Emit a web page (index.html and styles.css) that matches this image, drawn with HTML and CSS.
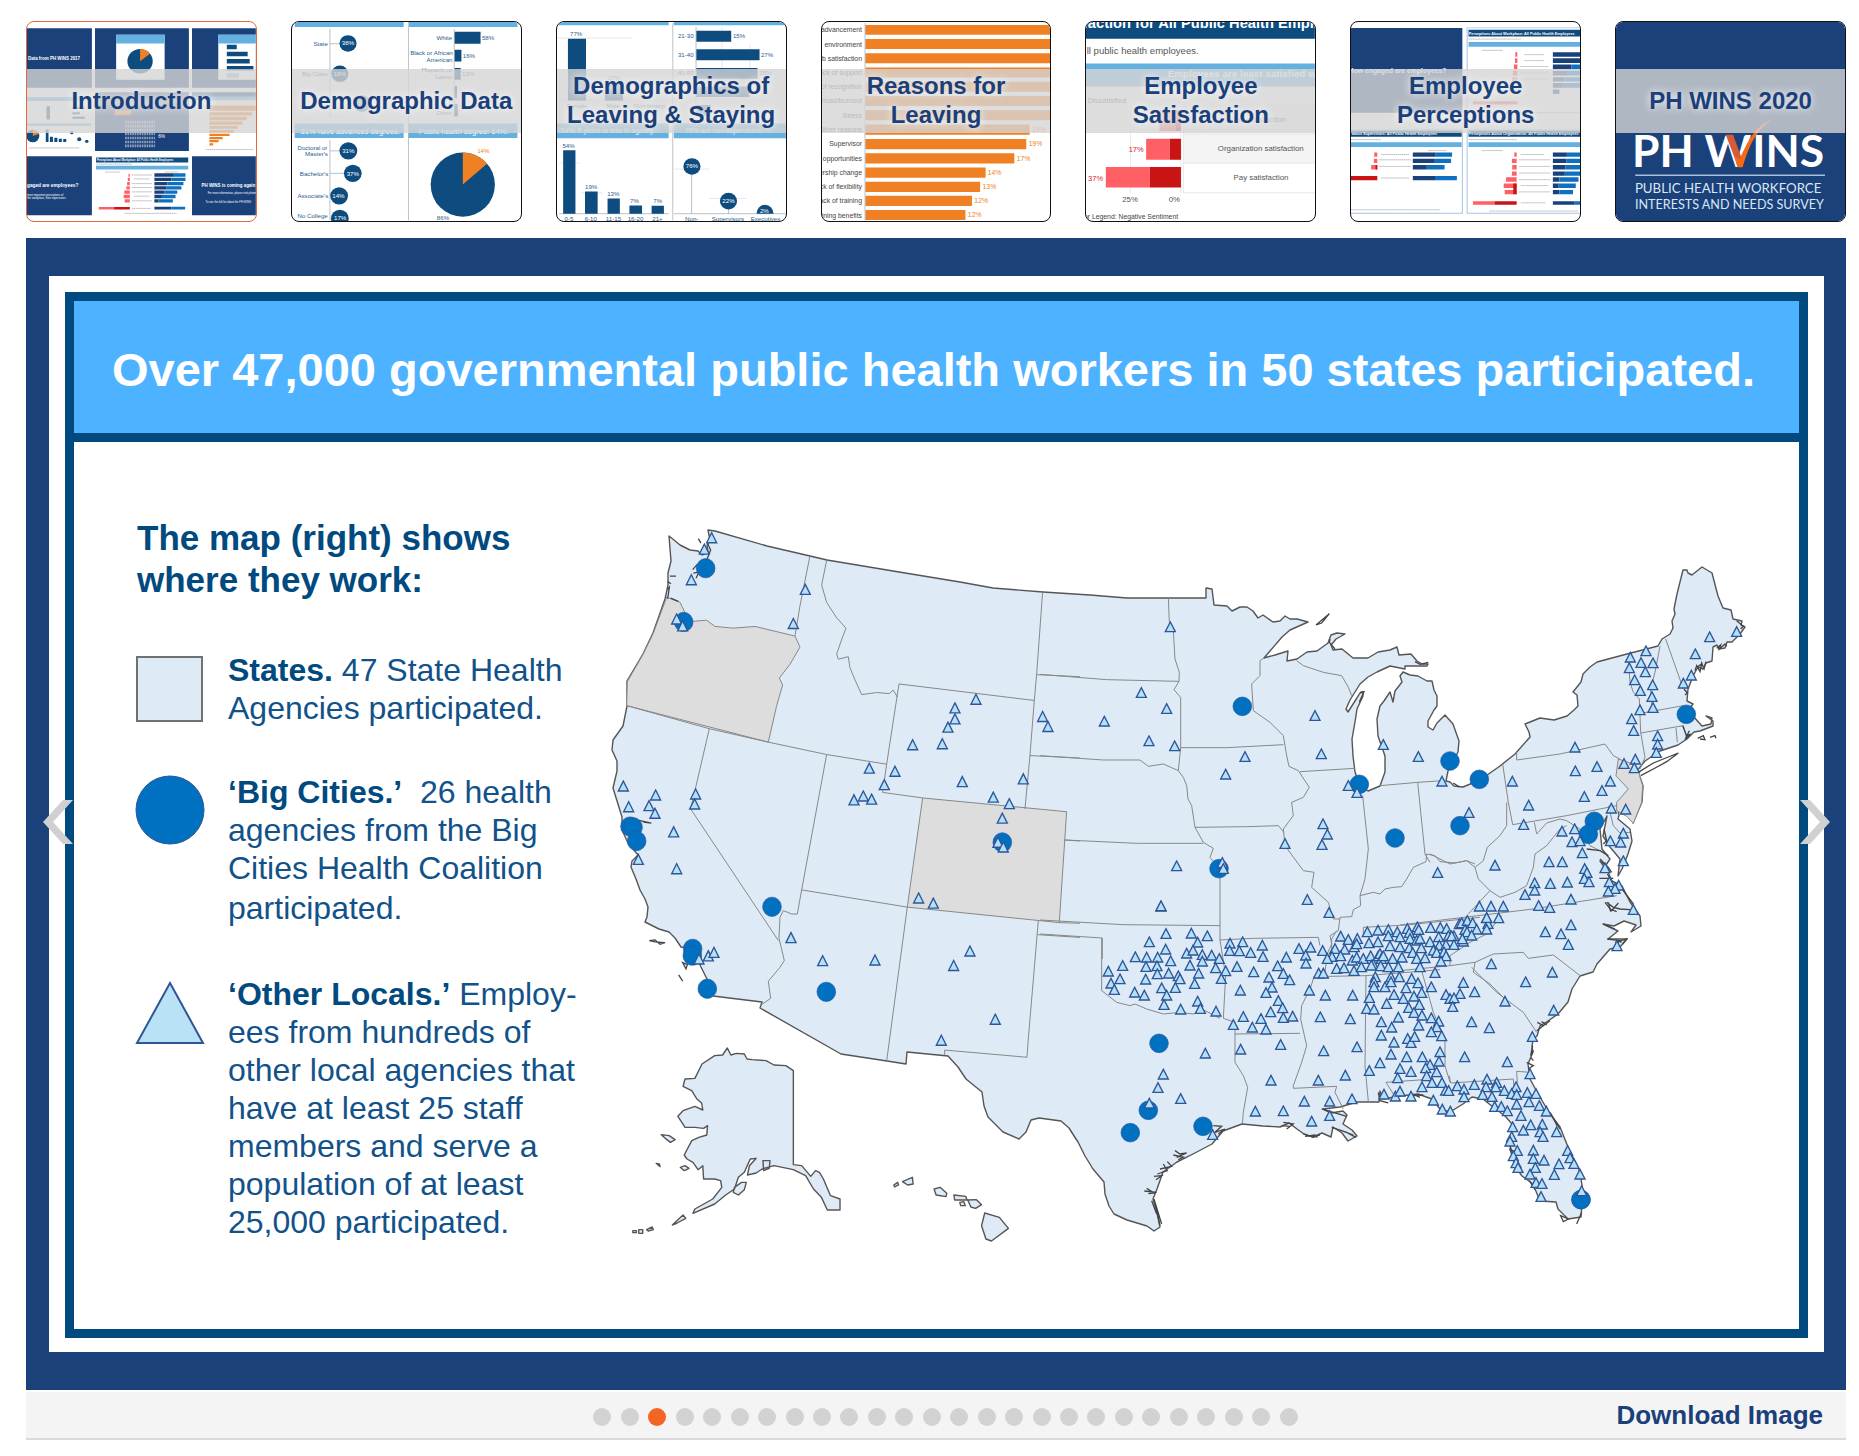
FILE: index.html
```html
<!DOCTYPE html>
<html lang="en">
<head>
<meta charset="utf-8">
<title>PH WINS Slides</title>
<link rel="stylesheet" href="styles.css">
</head>
<body>
<main class="page">
<nav class="thumbs" aria-label="Sections">
<a class="thumb thumb-active" href="#introduction">
<svg class="thumb-art" viewBox="77 61 670 583" preserveAspectRatio="xMidYMid slice" aria-hidden="true">
<g transform="scale(1 .968)">
<path class="navy" d="M77 82H267V262H77ZM276 82H551V262H276ZM560 82H747V262H560ZM276 276H551V453H276ZM77 469H267V648H77ZM560 469H747V648H560Z"/>
<path class="white" d="M338 102H480V238H338ZM637 102H747V238H637Z"/>
<path class="sky" d="M338 102H480V128H338ZM637 102H747V128H637ZM77 290H265V302H77ZM77 370H265V377H77ZM560 290H747V300H560ZM279 498H549V509H279Z"/>
<circle class="deep" cx="408" cy="182" r="37"/><path class="amber" d="M408 182V145A37 37 0 0 1 437 159Z"/>
<path class="deep" d="M662 132H691V146H662ZM662 153H723V167H662ZM662 175H729V189H662ZM662 196H740V210H662ZM132 388H140V426H132ZM144 410H153V426H144ZM157 413H166V426H157ZM170 416H179V426H170ZM183 417H192V426H183ZM134 318H144V358H134ZM210 320H246V326H210ZM210 336H232V342H210ZM210 350H246V356H210ZM279 473H549V488H279ZM560 276H747V289H560Z"/>
<path class="grey" d="M662 218H698V232H662Z"/>
<circle class="deep" cx="94" cy="408" r="19"/><path class="amber" d="M94 408V389A19 19 0 0 1 112 402Z"/>
<circle class="deep" cx="208" cy="398" r="5"/><circle class="deep" cx="230" cy="418" r="6"/><circle class="deep" cx="252" cy="424" r="5"/>
<path class="dots-light" d="M364 366H452M364 378H452M364 390H452M364 402H452M364 414H452M364 426H452M364 438H452"/>
<path class="amber" d="M334 330H382V345H334ZM611 316H747V332H611ZM611 336H736V346H611ZM611 350H720V360H611ZM611 364H708V374H611ZM611 378H694V386H611ZM611 390H682V398H611ZM611 401H670V408H611ZM611 411H650V418H611ZM611 420H638V427H611ZM611 430H622V437H611Z"/>
<path class="navy" d="M450 521H507V531H450ZM450 534H500V544H450ZM450 547H488V557H450ZM450 560H486V570H450ZM450 573H480V583H450ZM450 586H472V596H450ZM450 599H462V609H450ZM450 622H500V630H450Z"/>
<path class="blue" d="M507 521H541V531H507ZM500 534H541V544H500ZM488 547H535V557H488ZM486 560H529V570H486ZM480 573H517V583H480ZM472 586H512V596H472ZM462 599H504V609H462ZM500 622H540V630H500Z"/>
<path class="rose" d="M374 522H378V531H374ZM372 534H378V544H372ZM370 547H378V557H370ZM368 560H378V570H368ZM362 573H378V583H362ZM360 586H378V596H360ZM363 599H378V609H363ZM287 623H332V630H287Z"/>
<path class="red" d="M332 623H378V630H332Z"/>
<path class="faint" d="M384 526H443M390 538H436M384 552H443M384 564H443M384 577H443M390 590H436M384 604H443M306 517H350M480 517H520M363 642H515M82 444H230M600 449H740M384 627H440M280 493H384"/>
</g>
<text class="t-white t-b" x="80" y="171" font-size="13">Data from PH WINS 2017</text>
<text class="t-white t-b" x="77" y="544" font-size="14">gaged are employees?</text>
<text class="t-white t-b" x="588" y="544" font-size="13">PH WINS is coming again</text>
<text class="t-white t-b" x="281" y="468" font-size="8">Perceptions About Workplace: All Public Health Employees</text>
<text class="t-white" x="78" y="570" font-size="8">most important perceptions of</text>
<text class="t-white" x="78" y="579" font-size="8">the workplace, their supervisors</text>
<text class="t-white" x="606" y="564" font-size="8">For more information, please visit phwins</text>
<text class="t-white" x="600" y="590" font-size="8">To see the full list about the PH WINS</text>
<text class="t-white" x="461" y="402" font-size="14">6%</text>
</svg>
<span class="thumb-label">Introduction</span></a>
<a class="thumb" href="#demographic">
<svg class="thumb-art" viewBox="845 61 670 583" preserveAspectRatio="xMidYMid slice" aria-hidden="true">
<g transform="scale(1 .968)">
<path class="sky" d="M853 60H1172V78H853ZM1186 60H1505V78H1186ZM853 370H1172V414H853ZM1186 370H1505V414H1186Z"/>
<path class="axis" d="M956 84V350M956 420V663M1320 84V355M956 129H990M956 453H990M956 521H1000M1186 78V663"/>
<g class="deep"><circle cx="1009" cy="128" r="25"/><circle cx="985" cy="220" r="25"/><circle cx="1050" cy="310" r="25"/><circle cx="1010" cy="453" r="26"/><circle cx="1023" cy="521" r="26"/><circle cx="983" cy="589" r="26"/><circle cx="985" cy="657" r="26"/><path d="M1321 93H1397V129H1321ZM1321 147H1341V183H1321ZM1321 202H1339V238H1321ZM1321 257H1328V293H1321ZM1321 311H1330V348H1321Z"/></g>
<ellipse class="deep" cx="1345" cy="555" rx="94" ry="97"/><path class="amber" d="M1345 555V458A94 97 0 0 1 1416 492Z"/>
</g>
<g class="t-deep" font-size="18"><text x="908" y="131">State</text><text x="874" y="220">Big Cities</text><text x="861" y="435">Doctoral or</text><text x="883" y="455">Master's</text><text x="868" y="511">Bachelor's</text><text x="861" y="577">Associate's</text><text x="861" y="634">No College</text><text x="1268" y="114">White</text><text x="1191" y="157">Black or African</text><text x="1239" y="177">American</text><text x="1224" y="208">Hispanic or</text><text x="1265" y="228">Latino</text><text x="1268" y="334">Other</text><text x="1401" y="114">58%</text><text x="1345" y="167">16%</text><text x="1343" y="220">13%</text><text x="1269" y="641">86%</text></g>
<g class="t-white" font-size="18"><text x="991" y="130">38%</text><text x="967" y="219">18%</text><text x="992" y="445">31%</text><text x="1005" y="511">37%</text><text x="963" y="577">14%</text><text x="968" y="642">17%</text></g>
<g class="t-white" font-size="22"><text x="870" y="388">31% have advanced degrees.</text><text x="1216" y="388">Public health degree: 14%.</text></g>
<text class="t-amber" x="1387" y="445" font-size="18">14%</text>
</svg>
<span class="thumb-label">Demographic Data</span></a>
<a class="thumb" href="#leaving-staying">
<svg class="thumb-art" viewBox="45 61 670 583" preserveAspectRatio="xMidYMid slice" aria-hidden="true">
<g transform="scale(1 .968)">
<path class="sky" d="M45 60H372V73H45ZM387 60H715V73H387ZM45 370H372V415H45ZM387 370H715V415H387Z"/>
<path class="axis" d="M50 643H372M387 643H715M452 78V350M439 500V643M547 605V643M384 66V663"/>
<path class="grid" d="M45 112H265M45 301H372M50 490H110M115 580H180M385 508H490M490 597H600M610 130V350M528 80V350"/>
<path class="deep" d="M77 114H130V301H77ZM185 250H238V301H185ZM453 90H555V123H453ZM453 146H638V179H453ZM453 202H632V235H453ZM453 258H608V290H453ZM453 314H495V347H453ZM63 451H99V643H63ZM127 576H164V643H127ZM193 597H229V643H193ZM257 618H294V643H257ZM322 619H358V643H322Z"/>
<g class="deep"><circle cx="440" cy="500" r="25"/><circle cx="547" cy="605" r="25"/><path d="M629 643A25 27 0 0 1 679 643Z"/></g>
</g>
<g class="t-deep" font-size="18"><text x="83" y="103">77%</text><text x="194" y="231">22%</text><text x="61" y="430">54%</text><text x="127" y="551">19%</text><text x="192" y="571">13%</text><text x="259" y="590">7%</text><text x="327" y="591">7%</text><text x="399" y="109">21-30</text><text x="399" y="163">31-40</text><text x="399" y="217">41-50</text><text x="560" y="109">15%</text><text x="642" y="163">27%</text><text x="638" y="217">26%</text><text x="74" y="313">Female</text><text x="190" y="313">Male</text><text x="270" y="313">Non-binary/</text><text x="67" y="645">0-5</text><text x="126" y="645">6-10</text><text x="188" y="645">11-15</text><text x="252" y="645">16-20</text><text x="324" y="645">21+</text><text x="420" y="645">Non-</text><text x="498" y="645">Supervisors</text><text x="612" y="645">Executives</text></g>
<g class="t-white" font-size="18"><text x="422" y="490">76%</text><text x="529" y="592">22%</text><text x="639" y="620">2%</text></g>
<g class="t-white" font-size="20"><text x="55" y="387">54%: 5 years or less in agency.</text><text x="420" y="387">76% are non-supervisors.</text></g>
</svg>
<span class="thumb-label">Demographics of Leaving &amp; Staying</span></a>
<a class="thumb" href="#reasons">
<svg class="thumb-art" viewBox="815 61 670 583" preserveAspectRatio="xMidYMid slice" aria-hidden="true">
<g transform="scale(1 .968)"><path class="amber" d="M942 72H1485V102H942ZM942 115H1485V145H942ZM942 158H1485V188H942ZM942 201H1485V231H942ZM942 244H1485V274H942ZM942 287H1485V317H942ZM942 330H1485V360H942ZM942 373H1423V404H942ZM942 417H1413V448H942ZM942 460H1378V491H942ZM942 503H1294V534H942ZM942 546H1278V577H942ZM942 589H1254V620H942ZM942 632H1235V662H942Z"/><path class="axis" d="M941 66V664"/></g>
<g class="t-dark" font-size="20" text-anchor="end"><text x="932" y="91">advancement</text><text x="932" y="133">environment</text><text x="932" y="174">Job satisfaction</text><text x="932" y="216">Lack of support</text><text x="932" y="257">Lack of recognition</text><text x="932" y="299">Overload/burnout</text><text x="932" y="341">Stress</text><text x="932" y="383">Other reasons</text><text x="932" y="425">Supervisor</text><text x="932" y="467">opportunities</text><text x="932" y="508">Leadership change</text><text x="932" y="550">Lack of flexibility</text><text x="932" y="592">Lack of training</text><text x="932" y="634">Retaining benefits</text></g>
<g class="t-amber" font-size="20"><text x="1430" y="383">19%</text><text x="1420" y="425">19%</text><text x="1385" y="467">17%</text><text x="1300" y="508">14%</text><text x="1285" y="550">13%</text><text x="1261" y="592">12%</text><text x="1242" y="633">12%</text></g>
</svg>
<span class="thumb-label">Reasons for Leaving</span></a>
<a class="thumb" href="#satisfaction">
<svg class="thumb-art" viewBox="73 61 670 583" preserveAspectRatio="xMidYMid slice" aria-hidden="true">
<g transform="scale(1 .968)"><path class="deep" d="M73 60H743V114H73Z"/><path class="sky" d="M73 189H743V258H73Z"/><path class="panel" d="M358 313H745V402H358Z"/><path class="panel" d="M358 404H745V490H358Z"/><path class="grid" d="M358 313V580H745M358 490H745M358 403H745M203 318V580M351 318V580"/>
<path class="rose" d="M288 330H335V393H288ZM249 416H318V480H249ZM131 502H260V564H131Z"/><path class="red" d="M335 330H351V393H335ZM318 416H351V480H318ZM260 502H351V564H260Z"/></g>
<text class="t-white t-b" x="64" y="78" font-size="43">faction for All Public Health Employees</text>
<text class="t-grey" x="75" y="155" font-size="28">ll public health employees.</text>
<text class="t-white t-b" x="312" y="223" font-size="29">Employees are least satisfied with</text>
<text class="t-grey" x="78" y="298" font-size="22">Dissatisfied</text>
<g class="t-grey" font-size="23"><text x="500" y="354">Job satisfaction</text><text x="459" y="440">Organization satisfaction</text><text x="505" y="524">Pay satisfaction</text><text x="179" y="589">25%</text><text x="315" y="589">0%</text></g><text class="t-dark" x="67" y="639" font-size="20">or Legend: Negative Sentiment</text>
<g class="t-red" font-size="22"><text x="198" y="442">17%</text><text x="79" y="526">37%</text></g>
</svg>
<span class="thumb-label">Employee Satisfaction</span></a>
<a class="thumb" href="#perceptions">
<svg class="thumb-art" viewBox="840 61 670 583" preserveAspectRatio="xMidYMid slice" aria-hidden="true">
<g transform="scale(1 .968)"><path class="navy" d="M840 81H1166V338H840Z"/><path class="card" d="M1180 81H1515V338H1180ZM830 390H1166V642H830ZM1180 390H1515V642H1180Z"/>
<path class="deep" d="M1184 87H1515V107H1184ZM840 392H1164V410H840ZM1184 392H1515V410H1184Z"/><path class="sky" d="M1184 124H1515V138H1184ZM840 427H1164V441H840ZM1184 427H1515V441H1184Z"/>
<path class="navy" d="M1431 155H1515V168H1431ZM1431 173H1515V187H1431ZM1431 192H1485V206H1431ZM1431 211H1475V225H1431ZM1431 230H1465V243H1431ZM1431 248H1460V262H1431ZM1431 267H1450V281H1431ZM1021 458H1088V471H1021ZM1021 477H1083V490H1021ZM1021 496H1062V509H1021ZM1021 529H1086V542H1021ZM1431 458H1472V471H1431ZM1431 477H1470V490H1431ZM1431 496H1468V509H1431ZM1431 515H1466V528H1431ZM1431 533H1450V546H1431ZM1431 552H1448V565H1431ZM1431 571H1450V584H1431ZM1431 605H1495V616H1431Z"/>
<path class="blue" d="M1485 192H1515V206H1485ZM1475 211H1515V225H1475ZM1465 230H1515V243H1465ZM1460 248H1515V262H1460ZM1088 458H1136V471H1088ZM1083 477H1133V490H1083ZM1062 496H1114V509H1062ZM1086 529H1150V542H1086ZM1472 458H1515V471H1472ZM1470 477H1515V490H1470ZM1468 496H1515V509H1468ZM1466 515H1515V528H1466ZM1450 533H1506V546H1450ZM1448 552H1498V565H1448ZM1450 571H1490V584H1450ZM1495 605H1515V616H1495Z"/>
<path class="rose" d="M1321 155H1327V168H1321ZM1320 173H1327V187H1320ZM1317 192H1327V206H1317ZM1314 211H1327V225H1314ZM1312 230H1327V243H1312ZM1197 303H1327V313H1197ZM908 458H917V471H908ZM907 477H917V490H907ZM899 496H917V509H899ZM1318 458H1325V471H1318ZM1311 477H1325V490H1311ZM1312 496H1325V509H1312ZM1311 515H1325V528H1311ZM1294 533H1325V546H1294ZM1287 552H1325V565H1287ZM1290 571H1325V584H1290ZM1197 605H1260V616H1197Z"/><path class="red" d="M840 529H917V542H840ZM1260 605H1325V616H1260ZM912 496H917V509H912ZM1315 552H1325V584H1315Z"/>
<path class="faint" d="M1348 162H1405M1348 180H1405M1336 198H1418M1336 218H1418M1336 236H1418M928 464H1010M922 480H1016M922 500H1016M928 535H1010M1337 464H1405M1332 480H1424M1332 500H1424M1332 520H1424M1332 540H1424M1337 558H1418M1332 577H1424M1337 610H1410M1223 149H1285M1223 452H1285M1066 452H1120M1184 115H1337M840 631H1100M1245 635H1505M1184 419H1326M840 419H928"/></g>
<text class="t-white t-b" x="833" y="210" font-size="20">How engaged are employees?</text><text class="t-white t-b" x="1185" y="98" font-size="11">Perceptions About Workplace: All Public Health Employees</text><text class="t-white t-b" x="842" y="391" font-size="11">about Supervisors: All Public Health Employees</text><text class="t-white t-b" x="1185" y="391" font-size="11">Perceptions About Organization: All Public Health Employees</text>
</svg>
<span class="thumb-label">Employee Perceptions</span></a>
<a class="thumb" href="#phwins-2020">
<svg class="thumb-art" viewBox="105 63 690 604" preserveAspectRatio="xMidYMid slice" aria-hidden="true">
<rect class="navy" x="100" y="60" width="700" height="610"/>
<g class="logo-big" font-size="134"><text x="153" y="501">PH</text><text x="372" y="501">W</text><text x="516" y="501">INS</text></g>
<path class="check-dark" d="M436 405H458L484 476L473 503Z"/>
<path class="check" d="M471 503H487C506 440 524 395 578 357C528 380 508 410 478 479L462 470Z"/>
<path class="logo-rule" d="M163 527H735"/>
<text class="logo-small" x="162" y="581" font-size="40">PUBLIC HEALTH WORKFORCE</text><text class="logo-small" x="162" y="629" font-size="38">INTERESTS AND NEEDS SURVEY</text>
</svg>
<span class="thumb-label">PH WINS 2020</span></a>
</nav>

<section class="viewer" aria-label="Slide 3 of 26">
<article class="slide">
<header class="slide-head"><h1 class="slide-title">Over 47,000 governmental public health workers in 50 states participated.</h1></header>
<div class="slide-body">
<div class="legend">
<h2 class="legend-title">The map (right) shows where they work:</h2>
<div class="legend-item">
<svg class="key" viewBox="0 0 70 75" aria-hidden="true"><rect x="2" y="6" width="65" height="64" fill="#deeaf6" stroke="#6f7173" stroke-width="2"/></svg>
<p class="legend-text"><strong>States.</strong> 47 State Health Agencies participated.</p></div>
<div class="legend-item">
<svg class="key" viewBox="0 0 70 75" aria-hidden="true"><circle cx="35" cy="37" r="34" fill="#0070c0" stroke="#2f5597"/></svg>
<p class="legend-text"><strong>‘Big Cities.’</strong>&nbsp; 26 health agencies from the Big Cities Health Coalition <span class="loose">participated.</span></p></div>
<div class="legend-item">
<svg class="key" viewBox="0 0 70 75" aria-hidden="true"><path d="M35 8L68 68H2Z" fill="#b9e2f7" stroke="#2f5597" stroke-width="2"/></svg>
<p class="legend-text"><strong>‘Other Locals.’</strong> Employ-<br>ees from hundreds of<br>other local agencies that<br>have at least 25 staff<br>members and serve a<br>population of at least<br>25,000 participated.</p></div>
</div>
<svg class="map" viewBox="600 520 1160 730" role="img" aria-label="Map of participating agencies in the United States">
<defs>
<marker id="local" markerUnits="userSpaceOnUse" markerWidth="40" markerHeight="40" viewBox="-20 -20 40 40" orient="0"><path d="M-15 13H15L0 -16Z" fill="#b4e1fa" stroke="#2f5597" stroke-width="4"/></marker>
<marker id="city" markerUnits="userSpaceOnUse" markerWidth="62" markerHeight="62" viewBox="-31 -31 62 62" orient="0"><circle r="28" fill="#0070c0" stroke="#2b579e" stroke-width="2"/></marker>
</defs>
<path class="coast" d="M669 537L674 541 680 546 690 551 698 552 702 556 708 553 707 546 710 541 708 531 715 532 767 547 810 557 827 561 893 572 960 583 993 589 1043 593 1090 596 1127 599H1206V589L1212 590 1214 606 1227 607 1232 612 1240 608 1247 608 1253 612 1258 619 1263 616 1273 623 1280 622 1285 617 1290 620 1297 620 1308 623 1290 631 1282 638 1264 659 1275 656 1288 652 1287 662 1297 660 1307 653 1317 652 1328 644 1331 636 1337 634 1345 635 1336 640 1331 646 1333 651 1342 650 1353 659 1368 659 1378 653 1390 651 1397 648 1399 656 1411 655 1417 662 1422 665 1428 665 1427 667 1405 667 1405 670 1390 667 1377 673 1368 678 1360 685 1355 693 1350 701 1346 710 1348 713 1355 702 1360 694 1363 693 1363 697 1357 710 1355 723 1352 740 1353 757 1355 773 1360 787 1368 792 1380 787 1385 773 1385 757 1378 737 1377 720 1380 707 1384 702 1390 693 1393 703 1395 692 1402 683 1400 677 1403 673 1410 676 1418 677 1427 682 1432 682 1434 691 1437 697 1437 707 1434 711 1428 722 1428 728 1433 731 1437 724 1445 716 1453 725 1459 742 1458 753 1448 772 1446 782 1450 783 1454 787 1463 788 1480 781 1500 767 1515 755 1530 738 1529 733 1525 725 1540 719 1554 721 1567 717 1574 711 1578 707 1577 696 1573 693 1581 683 1583 675 1590 668 1597 663 1627 655 1658 647 1662 640 1670 635 1673 629 1672 622 1675 615 1674 610 1677 595 1683 571 1687 571 1688 574 1692 576 1702 568 1712 574 1718 597 1723 609 1731 611 1733 620 1742 622 1741 626 1745 628 1740 635 1732 643 1727 643 1725 649 1719 650 1717 646 1713 648 1712 662 1706 664 1703 670 1698 668 1693 677 1690 685 1688 690 1687 702 1693 705 1688 712 1693 717 1702 727 1711 725 1712 719 1706 717 1713 722 1713 727 1700 732 1694 733 1687 740 1678 746 1660 752 1645 762 1637 772 1636 777 1640 778 1643 787 1642 803 1633 824 1632 818 1625 814 1618 810 1619 816 1618 820 1630 830 1632 842 1628 855 1622 870 1618 877 1620 860 1610 848 1603 837 1607 817 1600 830 1602 850 1610 860 1606 866 1600 862 1608 873 1612 882 1622 887 1630 903 1640 917 1641 927 1631 933 1636 926 1624 922 1614 927 1603 925 1618 932 1608 940 1627 940 1620 948 1610 950 1597 965 1593 973 1580 977 1572 990 1568 1003 1558 1015 1548 1022 1540 1027 1537 1037 1533 1040 1532 1048 1533 1053 1528 1065 1530 1080 1537 1093 1550 1115 1560 1128 1568 1148 1580 1173 1583 1193 1581 1218 1568 1220 1558 1210 1556 1203 1540 1202 1533 1185 1522 1177 1515 1167 1510 1150 1512 1140 1512 1125 1505 1117 1493 1108 1483 1100 1472 1098 1463 1105 1450 1113 1440 1110 1432 1100 1418 1095 1400 1097 1383 1100 1380 1092 1379 1103 1357 1103 1340 1108 1323 1110 1331 1114 1343 1112 1347 1116 1343 1125 1352 1131 1357 1137 1348 1142 1342 1134 1333 1128 1331 1138 1322 1134 1313 1138 1304 1135 1297 1130 1289 1124 1280 1128 1263 1127 1242 1125 1223 1132 1212 1145 1193 1155 1177 1163 1163 1173 1157 1190 1153 1200 1157 1214 1160 1228 1154 1232 1147 1227 1127 1221 1114 1215 1109 1207 1105 1195 1104 1183 1093 1170 1085 1157 1078 1143 1076 1140 1069 1129 1061 1122 1039 1119 1031 1121 1026 1133 1019 1140 1003 1133 988 1118 984 1107 982 1093 966 1080 958 1068 948 1057 907 1053 906 1065 887 1062 841 1055 760 1009 762 1003 713 997 708 982 701 968 693 950 681 948 675 939 669 933 659 930 645 923 647 918 648 908 645 900 640 891 636 880 631 868 632 862 638 856 628 844 622 831 622 818 613 789 617 772 617 762 612 751 613 741 623 727 627 707 627 682 643 655 653 634 665 600 668 586 668 574 671 562Z"/>
<g transform="translate(600 500) scale(.3333 .3444)">
<path class="out" d="M200 285L240 300 255 330 280 355 320 352 345 370 400 375 465 370 585 398 600 430 570 480 538 520 548 540 530 600 505 706 80 600 82 530 130 450 160 390ZM968 868L1400 908 1378 1230 922 1185Z"/>
<path class="state" d="M630 165L600 310 585 398M680 178L665 250 680 300 710 345 738 375 728 400 710 450 715 465 745 458 750 490 765 525 785 568 830 562 868 565 880 555 892 575M897 537L860 770M505 706L680 742 860 770M80 600L328 667 272 900 535 1282M680 742L605 1135 592 1205 575 1205 550 1195 540 1215 537 1275 553 1340 540 1360 505 1400 512 1450 482 1470M605 1135L922 1185M897 537L1303 585M860 770L848 852 968 868M1328 270L1310 510 1303 585 1290 745 1275 900M1310 510L1440 516M1290 745L1440 752M1392 990L1440 993M922 1185L860 1632M1315 1225L1285 1568 1281 1621 1034 1600V1614M1378 1230L1440 1232M1313 1265L1440 1273M328 667L505 706"/>
<path class="rock" d="M295 115L303 128 M210 224H228 M203 240L213 246 M202 262L208 256 203 290 M212 288L235 297 M278 205L290 192 300 200 M280 215L297 212 288 230 M322 128L332 148 320 178 M88 925L110 932 154 941 130 938 M148 1282L165 1286 195 1288 180 1293 165 1280Z M248 1346L262 1352 258 1364Z M236 1382L248 1400"/>
</g>
<g transform="translate(1040 560) scale(.33333)">
<path class="state" d="M0 346L200 362 417 367M385 117L388 190 400 215 405 300 418 340 417 367 402 392 422 415V565L415 635M0 590L190 603H300L325 622 370 615 415 635 430 655 440 680 444 720 455 740 465 805 490 850 520 868 510 895 540 930V1143M422 566H560L730 557M672 297L660 305V350L635 375 640 455 690 490 730 530 740 590 747 622 775 635 808 685 790 715 755 730 760 770 730 810 735 860 790 935 822 940 815 985 865 1030 880 1080 900 1080M465 805L620 803 715 800 732 820M75 843L290 853H490M0 1083L250 1097 540 1100M0 1125L187 1137V1200M540 1143L640 1138 835 1135 840 1160M780 638L945 628M770 305L790 320 850 340 905 350 925 385 935 410M968 710L985 870 975 960 960 1010 1000 1000 1020 1005 1035 990 1060 985 1085 983 1100 960 1120 925 1158 908 1160 885 1185 890 1200 908 1245 912 1280 905 1305 915M960 1010L962 1040 940 1052 935 1073 900 1075 895 1115 870 1130 875 1155 855 1200M1133 670L1155 885M1020 680L1133 670 1210 665M970 1125V1105L1100 1098 1320 1075"/>
<path class="rock" d="M828 198L868 164 845 192ZM870 240L868 250 885 270 M1125 308L1140 316 1165 310 M960 400L972 398 962 420 958 430 M1240 672L1258 684"/>
</g>
<g transform="translate(1400 540) scale(.33333)">
<path class="out" d="M655 660L690 672 715 690 720 715 728 740 725 790 700 853 680 832 650 815V790L685 750 648 710Z"/>
<path class="state" d="M308 675L325 790 338 857 500 830 650 800M350 640V663L480 645 615 615 640 650 660 660M320 790V860L300 890 262 925 250 965 225 985 235 1020 270 1055 300 1075 345 1060 380 1040 400 985 405 945 440 920 480 870 500 860M75 945L90 970 M90 945L120 960 150 975 200 965 225 985M403 850L410 885 440 852 480 840 500 845 540 870 570 920 600 935M270 1055L205 1125M0 1158L400 1110 650 1070M305 1130L260 1185 210 1210 150 1250V1280M0 1295L150 1280 225 1270 280 1245 370 1240 385 1258 460 1248 543 1312M225 1270L220 1300 270 1335 315 1380M685 352L690 430 700 460 718 480 722 580 735 655 720 690M780 322L765 400 752 450 757 520M797 300L850 450M722 523L850 500M722 582L850 560 860 600M828 567L832 610M625 800L640 860 660 882 690 880"/>
<path class="rock" d="M715 700L760 672 835 642 800 668 760 690 722 710M893 598L910 590 915 602 900 600M930 595L945 590 948 598 M848 560L860 590 872 585 855 602 868 575 M885 395L890 380 900 398 905 372 912 390 918 368 M890 385L905 375 900 398M852 450L862 462 855 468M950 328L962 318 958 330 975 315 980 322M1010 245L1030 262 1022 270 M600 960L625 985 635 1000M598 1018H640M620 1090L640 1105 660 1110 690 1112 M625 1090L632 1118 M655 1035L700 1095 M560 930L600 935 625 950 M645 1210L680 1200 668 1215 M612 870L620 905 610 915 M622 1005L632 1020 625 1030"/>
</g>
<g transform="translate(1080 880) scale(.33333)">
<path class="state" d="M420 183L437 290 430 418 465 430V465L660 463M465 465V550L490 590 503 625 490 700 487 735M65 178V335L110 370 150 380 165 375 200 390 250 405 300 400 340 405 375 395 420 418M770 155L755 180 755 210 740 240 735 280 700 300 690 330 665 380 662 420 680 500 665 550 640 620V628L770 622 765 640 790 690M700 293L858 290 1080 272M858 290L855 560 865 668M1025 275L1060 400 1095 480V560L1110 610M940 645L918 610 1060 600"/>
<path class="rock" d="M285 815L300 825 320 822 290 835 M280 828L310 835 295 842 M262 848L275 862 240 870 M250 855L262 875 232 885 M222 892L245 890 228 902 M193 936L230 940 M200 928L222 942 205 944 M222 960L245 1035 M215 965L230 1005 M225 970L240 1040 M400 740L425 742 405 760 435 750 415 765 M610 730L640 735 620 750 M605 740L630 742 M670 765L700 775 720 768 M675 772L705 768 712 776 M725 690L760 700 800 712 M755 745L800 760 828 775 M785 755L820 768 M895 640L900 665 925 672 M985 650L1030 648 M1000 646L1020 655"/>
</g>
<g transform="translate(1320 880) scale(.33333)">
<path class="state" d="M388 590L392 612 580 600 582 622 592 612 590 577 630 580M455 265L530 340 610 400 650 460"/>
<path class="rock" d="M652 430L670 440 650 455 690 425 M665 428L680 438 M638 500L632 530 640 515 M620 550L640 560 625 570 M632 535L640 545 M690 700L720 750 M695 708L712 742 M570 800L578 825 M568 812L580 815 M635 915L650 925 M628 905L645 932 M770 1035L785 1000 M722 1010L745 1020 730 1028Z M855 70L875 95 895 72 M850 135L885 150 M862 180L900 185 885 200 M890 182L905 190 M870 90L890 98"/>
</g>
<g transform="translate(600 900) scale(.3954 .33333)">
<path class="coast" d="M322 447L331 468 345 463 365 465 372 480 385 482 420 485 440 498 470 500 489 515V797L510 800 533 832 545 815 555 820 565 840 583 890 607 900V933H575L560 895 540 870 520 830 489 812 440 800 410 810 395 822 373 828 378 800 395 778 380 780 365 820 350 835 340 870 318 888 290 915 235 943 240 930 285 900 308 865 305 845 290 840 262 840 260 800 248 812 235 790 220 780 213 768 232 725 250 715 270 708 272 680 262 688 240 685 215 685 197 652 210 635 240 622 260 633 257 612 245 600 232 575 210 562 215 540 240 538 258 495 290 470 310 468ZM155 707L175 710 190 722 178 730 165 718ZM203 805L215 800 225 808 213 815ZM340 865L358 850 370 850 365 872 350 888 337 880ZM183 978L210 948 217 958 195 972ZM118 992L132 984 135 992 122 996ZM98 992H108V1003H98ZM83 995H92V1001H83ZM142 793L150 795 152 803ZM743 858L753 850 755 858 745 864ZM765 848L790 835 792 855 778 858ZM845 870L860 865 877 883 875 893 850 888ZM895 888L925 892 928 903 897 903ZM910 910L920 908 924 920 912 920ZM930 903L952 902 965 917 950 928 938 924ZM973 942L1010 955 1033 988 990 1026 976 1020 965 980ZM412 785H430L428 808 414 815Z"/>
</g>
<g class="cities">
<path transform="translate(600 500) scale(.3333 .3444)" d="M317 201L251 357 90 951 99 953 110 993 516 1184 278 1306 277 1326 322 1422 679 1431 1207 997"/>
<path transform="translate(1040 560) scale(.33333)" d="M607 442L958 676 1230 606 1318 661 1065 837 1260 800 537 929"/>
<path transform="translate(1400 540) scale(.33333)" d="M859 526L583 847 565 886"/>
<path transform="translate(1080 880) scale(.33333)" d="M237 493L205 694 151 761 369 742"/>
<path transform="translate(1320 880) scale(.33333)" d="M783 962L783 962"/>
</g>
<g class="locals">
<path transform="translate(600 500) scale(.3333 .3444)" d="M335 114L313 147 274 236 616 264 580 363 230 350 248 370 1128 583 1065 608 1065 640 1044 664 1027 712 938 715 808 783 885 792 853 831 1087 822 1270 814 1180 867 1228 886 762 875 790 864 815 873 1207 928 1194 998 1210 1012 956 1160 1000 1175 70 835 86 895 167 861 147 892 165 914 287 858 284 887 221 968 230 1075 115 1048 573 1275 668 1342 825 1340 1110 1314 1061 1356 1186 1512 1024 1573 297 1337 325 1328 342 1318 1328 633 1344 662"/>
<path transform="translate(1040 560) scale(.33333)" d="M391 205L304 402 380 450 193 488 327 547 404 562 615 594 557 647 825 471 844 586 1030 558 1135 594 1206 668 1287 762 925 681 951 702 849 796 862 827 846 858 735 855 410 922 363 1043 547 912 550 930 802 1023 867 1062 1193 942"/>
<path transform="translate(1400 540) scale(.33333)" d="M1010 279L929 295 886 346 874 410 850 434 738 337 691 356 688 388 723 372 759 373 736 400 704 424 758 439 721 456 756 474 759 507 720 514 695 541 701 576 773 592 773 617 769 642 706 662 672 675 703 688 525 626 526 697 591 684 631 728 606 756 553 774 337 728 386 800 371 858 634 809 677 812 486 878 524 871 516 910 540 907 547 943 670 884 631 907 662 911 670 967 615 988 285 980 447 970 487 970 554 990 561 1002 553 1020 567 1030 404 1033 404 1055 375 1068 451 1035 502 1031 628 1030 656 1040 645 1050 625 1058 513 1082 416 1101 449 1107 700 1113 513 1159 436 1180 483 1186 505 1218 651 1222 238 1103 273 1103 310 1103 296 1138 260 1138 264 1155 260 1172"/>
<path transform="translate(1080 880) scale(.33333)" d="M243 82L258 165 334 164 382 172 208 190 257 212 353 191 166 235 200 236 233 236 320 224 339 215 367 228 395 230 418 240 128 261 85 278 198 264 231 262 272 247 330 260 367 248 407 268 437 277 120 301 93 314 103 333 197 302 232 286 266 284 295 292 300 301 356 284 344 315 424 300 245 328 286 327 260 350 164 341 193 350 252 378 302 392 353 368 361 390 408 398 450 194 488 190 449 216 478 217 512 222 547 200 549 234 471 264 521 280 593 262 619 236 657 210 692 206 677 230 678 254 728 216 567 296 610 285 629 304 481 335 576 326 558 342 595 366 608 388 572 400 490 414 543 420 460 438 517 446 558 452 610 417 638 413 482 512 602 498 376 524 573 605 250 587 234 627 302 660 208 674 398 768 526 698 610 697 673 668 695 728 749 668 749 711 716 284 688 335 721 415 731 517 715 605"/>
<path transform="translate(1320 880) scale(.33333)" d="M62 173L85 183 112 180 142 160 174 155 205 153 232 160 262 150 292 145 296 153 332 147 361 147 380 150 402 172 45 210 74 212 103 205 147 193 110 196 174 190 205 172 210 202 240 175 240 205 268 162 270 180 290 185 268 208 300 180 304 208 330 190 356 175 358 200 385 172 395 172 378 198 402 198 340 215 36 234 62 232 97 245 110 236 130 240 152 232 175 232 180 225 184 240 190 232 160 257 218 240 246 236 278 222 290 240 315 238 350 222 372 220 378 232 363 248 22 240 50 270 72 268 102 276 124 265 154 260 182 262 205 265 235 265 300 265 345 282 418 136 425 133 442 126 458 133 435 153 441 160 470 152 455 170 430 188 427 181 10 284 500 117 166 295 162 310 162 325 195 325 213 295 213 310 238 295 275 300 294 313 258 328 305 342 334 325 148 357 222 348 250 360 282 353 140 390 162 392 200 375 266 387 298 378 282 402 306 410 235 416 184 430 215 446 296 440 334 418 356 428 350 445 334 460 365 472 184 470 222 491 263 480 273 492 284 474 213 527 260 535 307 535 360 520 357 548 180 553 330 558 240 570 273 579 148 576 233 598 317 568 350 580 320 592 336 612 366 612 306 625 430 312 420 345 464 340 378 348 390 360 402 358 398 384 514 256 617 310 697 281 555 368 701 395 455 430 508 448 637 474 434 535 562 550 16 350 98 350 91 421 111 505 76 590 96 661 192 647 226 653 240 638 273 653 340 665 367 692 391 698 377 635 412 622 386 636 432 632 432 655 463 618 501 602 498 625 530 612 527 625 553 636 488 648 516 654 588 625 575 645 590 648 622 642 648 645 630 586 627 670 590 677 524 684 544 684 562 697 658 681 679 698 603 711 632 739 667 737 578 745 610 755 660 760 669 774 710 760 575 774 570 788 592 816 640 815 743 816 580 832 640 840 672 845 750 838 762 855 717 856 588 853 594 867 646 867 630 887 703 888 780 887 648 912 666 915 663 954 785 937"/>
</g>
</svg>
</div>
</article>
<button class="arrow arrow-prev" type="button" aria-label="Previous slide"><svg viewBox="0 0 30 44"><path d="M30 0H20L0 22 20 44H30L10 22Z"/></svg></button>
<button class="arrow arrow-next" type="button" aria-label="Next slide"><svg viewBox="0 0 30 44"><path d="M0 0H10L30 22 10 44H0L20 22Z"/></svg></button>
</section>
<footer class="bar">
<div class="dots">
<button class="dot" type="button" aria-label="Slide 1"></button>
<button class="dot" type="button" aria-label="Slide 2"></button>
<button class="dot dot-on" type="button" aria-label="Slide 3"></button>
<button class="dot" type="button" aria-label="Slide 4"></button>
<button class="dot" type="button" aria-label="Slide 5"></button>
<button class="dot" type="button" aria-label="Slide 6"></button>
<button class="dot" type="button" aria-label="Slide 7"></button>
<button class="dot" type="button" aria-label="Slide 8"></button>
<button class="dot" type="button" aria-label="Slide 9"></button>
<button class="dot" type="button" aria-label="Slide 10"></button>
<button class="dot" type="button" aria-label="Slide 11"></button>
<button class="dot" type="button" aria-label="Slide 12"></button>
<button class="dot" type="button" aria-label="Slide 13"></button>
<button class="dot" type="button" aria-label="Slide 14"></button>
<button class="dot" type="button" aria-label="Slide 15"></button>
<button class="dot" type="button" aria-label="Slide 16"></button>
<button class="dot" type="button" aria-label="Slide 17"></button>
<button class="dot" type="button" aria-label="Slide 18"></button>
<button class="dot" type="button" aria-label="Slide 19"></button>
<button class="dot" type="button" aria-label="Slide 20"></button>
<button class="dot" type="button" aria-label="Slide 21"></button>
<button class="dot" type="button" aria-label="Slide 22"></button>
<button class="dot" type="button" aria-label="Slide 23"></button>
<button class="dot" type="button" aria-label="Slide 24"></button>
<button class="dot" type="button" aria-label="Slide 25"></button>
<button class="dot" type="button" aria-label="Slide 26"></button>
</div>
<a class="download" href="#download">Download Image</a>
</footer>
</main>
</body>
</html>
```

FILE: styles.css
```css
* { box-sizing: border-box; }
body { margin: 0; background: #fff; font-family: "Liberation Sans", Arial, sans-serif; }
.page { padding: 21px 13px 14px 26px; }

/* Section thumbnails */
.thumbs { display: grid; grid-template-columns: repeat(7, 1fr); gap: 34px; margin-bottom: 16px; }
.thumb { position: relative; display: block; height: 201px; border: 1px solid #111; border-radius: 8px; overflow: hidden; background: #fff; text-decoration: none; }
.thumb-active { border-color: #e0693a; }
.thumb-art { display: block; width: 100%; height: 100%; }
.thumb-label { position: absolute; left: 0; right: 0; top: 47px; min-height: 64px; padding: 2px 8px 4px; display: flex; align-items: center; justify-content: center; text-align: center; font-size: 24px; line-height: 29px; font-weight: bold; color: #1a3f7a; background: rgba(212, 212, 212, .8); text-shadow: 0 0 8px #fff; }

.navy { fill: #1a4179; }
.deep { fill: #0e4c80; }
.sky { fill: #64b0e0; }
.blue { fill: #0f70c0; }
.amber { fill: #ef8024; }
.rose { fill: #ff6065; }
.red { fill: #c81414; }
.grey { fill: #a9b3bd; }
.white { fill: #fff; }
.panel { fill: #f4f4f4; }
.card { fill: #fff; stroke: #a8c4e4; stroke-width: 3; }
.axis { fill: none; stroke: #9aa3ab; stroke-width: 2; }
.grid { fill: none; stroke: #dcdcdc; stroke-width: 2; }
.faint { fill: none; stroke: #a0a0a8; stroke-width: 2; stroke-dasharray: 5 1; }
.dots-light { fill: none; stroke: #8d9cb8; stroke-width: 8; stroke-dasharray: 5 2; }
.t-white { fill: #fff; }
.t-deep { fill: #2d5d8c; }
.t-dark { fill: #444; }
.t-grey { fill: #555; }
.t-red { fill: #d8232f; }
.t-amber { fill: #ef8024; }
.t-b { font-weight: bold; }
.logo-big { fill: #fff; font-family: Lato, sans-serif; font-weight: bold; }
.logo-small { fill: #dbe7f5; font-family: Lato, sans-serif; }
.logo-rule { stroke: #a9c0dd; stroke-width: 5; }
.check { fill: #f96a15; }
.check-dark { fill: #d95a35; }

/* Slide */
.viewer { position: relative; padding: 38px 22px 38px 23px; background: #1a4179; }
.slide { padding: 16px 16px 14px; background: #fff; }
.slide-head { display: flex; align-items: center; justify-content: center; min-height: 150px; border: 9px solid #004a80; background: #4db2ff; }
.slide-title { margin: 0; padding: 5px 6px 0 0; font-size: 47px; line-height: 54px; color: #fff; text-align: center; }
.slide-body { display: grid; grid-template-columns: 465px 1fr; border: 9px solid #004a80; border-top: 0; padding: 75px 39px 80px 61px; align-items: start; }
.legend { color: #004a80; }
.legend-title { margin: 0 80px 50px 2px; font-size: 35px; line-height: 42px; }
.legend-item { display: flex; gap: 23px; margin-bottom: 46px; }
.legend-item:last-child { margin-bottom: 0; }
.key { flex: none; width: 70px; height: 75px; }
.legend-text { margin: 0; width: 355px; font-size: 32px; line-height: 38px; color: #12528a; }
.legend-text strong { color: #004a80; }
.loose { display: block; line-height: 42px; }
.map { display: block; width: 100%; margin-top: 2px; }
.coast { fill: #deeaf6; stroke: #555; stroke-width: 1.4; stroke-linejoin: round; vector-effect: non-scaling-stroke; }
.out { fill: #ddd; stroke: #888; stroke-width: 1; vector-effect: non-scaling-stroke; }
.state { fill: none; stroke: #888; stroke-width: 1; vector-effect: non-scaling-stroke; }
.rock { fill: none; stroke: #444; stroke-width: 1.3; vector-effect: non-scaling-stroke; }
.cities path { fill: none; marker: url(#city); }
.locals path { fill: none; marker: url(#local); }
.arrow { position: absolute; top: 562px; width: 30px; height: 44px; padding: 0; border: 0; background: none; cursor: pointer; }
.arrow svg { display: block; width: 30px; height: 44px; fill: #d0d0d0; }
.arrow-prev { left: 17px; }
.arrow-next { right: 16px; }

/* Bottom bar */
.bar { display: grid; grid-template-columns: 1fr auto 1fr; align-items: center; min-height: 48px; margin-top: 2px; border-bottom: 2px solid #dadada; background: #f4f4f4; }
.dots { grid-column: 2; padding: 4px 0 0 20px; font-size: 16px; line-height: 18px; }
.dot { width: 18px; height: 18px; margin: 0 3px 0 2px; padding: 0; border: 0; border-radius: 50%; background: #d2d2d2; vertical-align: top; cursor: pointer; }
.dot-on { background: #f26522; }
.download { grid-column: 3; justify-self: end; padding-right: 23px; font-size: 26px; line-height: 30px; font-weight: bold; color: #1a3f7a; text-decoration: none; }
```
